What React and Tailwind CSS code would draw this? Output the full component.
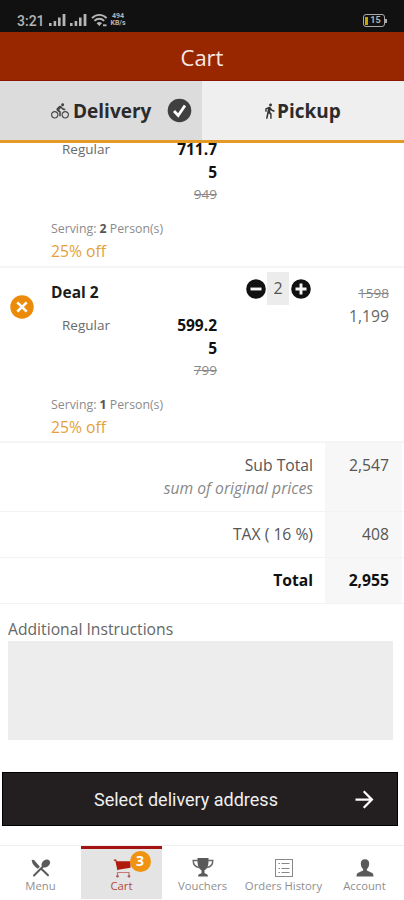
import React, { useState } from 'react';
import { MdDirectionsBike, MdDirectionsWalk, MdArrowForward } from 'react-icons/md';

const items = [
  { id: 1, size: 'Regular', price: ['711.7', '5'], oldPrice: '949', serving: 2, off: '25% off', scrolled: true },
  { id: 2, name: 'Deal 2', size: 'Regular', price: ['599.2', '5'], oldPrice: '799', serving: 1, off: '25% off', qty: 2, oldTotal: '1598', total: '1,199' },
];

function Signal() {
  return (
    <svg width="18" height="14" viewBox="0 0 18 14" fill="#b5b5b5">
      <rect x="0" y="10" width="2.6" height="3" />
      <rect x="4.6" y="8" width="2.6" height="5" />
      <rect x="9" y="4.5" width="2.6" height="8.5" />
      <rect x="13.6" y="1" width="2.8" height="12" />
    </svg>
  );
}

function StatusBar() {
  return (
    <div className="flex h-8 items-start bg-[#111] pl-[17px] pr-[17px] pt-[13px] text-[#b5b5b5]">
      <span className="w-[27px] font-['Roboto',sans-serif] text-[14px] font-medium leading-4">3:21</span>
      <div className="ml-[5px] flex gap-[3px]">
        <Signal />
        <Signal />
      </div>
      <svg className="ml-[3px]" width="17" height="14" viewBox="0 0 17 14" fill="none" stroke="#b5b5b5" strokeWidth="1.9">
        <path d="M1 5.2C5 .8 11.6.8 15.6 5.2M3.4 7.8c2.8-2.8 7-2.8 9.8 0" />
        <path d="M5.6 10.2c1.6-1.5 3.8-1.5 5.4 0L8.3 13z" fill="#b5b5b5" stroke="none" />
        <path d="M12 12.3h3.5" />
      </svg>
      <div className="ml-[2px] flex w-4 flex-col items-center font-['Roboto',sans-serif] text-[7px] font-bold leading-[7px]">
        <span>494</span>
        <span>KB/s</span>
      </div>
      <div className="ml-auto mt-px flex items-center">
        <div className="flex h-[13px] w-[22px] items-center rounded-[3px] border-[1.5px] border-[#aaa] p-px">
          <span className="h-2 w-[3px] bg-[#c5a400]" />
          <span className="flex-1 text-center font-['Roboto',sans-serif] text-[9px] font-bold leading-[9px]">15</span>
        </div>
        <span className="h-1 w-[2px] bg-[#aaa]" />
      </div>
    </div>
  );
}

function ModeTabs({ mode, setMode }) {
  return (
    <div className="flex h-[62px] border-b-[3px] border-[#e39a26] text-[19px] font-bold text-[#2b2b2b]">
      <button onClick={() => setMode('delivery')} className="flex w-[202px] items-center bg-[#dcdcdc] pl-[51px]">
        <MdDirectionsBike className="mr-1 size-[18px] text-[#444]" />
        <span className="w-[80px] pt-px text-left">Delivery</span>
        {mode === 'delivery' && (
          <svg className="ml-[14px]" width="25" height="25" viewBox="0 0 25 25">
            <circle cx="12.5" cy="12.5" r="11.8" fill="#404040" />
            <path d="M7 13l4.2 4.5L18 7.5" fill="none" stroke="#fff" strokeWidth="2.8" />
          </svg>
        )}
      </button>
      <button onClick={() => setMode('pickup')} className="flex flex-1 items-center bg-[#efefef] pl-[59px]">
        <MdDirectionsWalk className="-mr-px h-[18px] w-[17px] text-[#333]" />
        <span className="pt-px">Pickup</span>
      </button>
    </div>
  );
}

function RoundIcon({ minus }) {
  return (
    <svg width="20" height="20" viewBox="0 0 20 20">
      <circle cx="10" cy="10" r="9.8" fill="#111" />
      <path d={minus ? 'M4.5 10h11' : 'M4.5 10h11M10 4.5v11'} stroke="#f5f5f5" strokeWidth="2.9" />
    </svg>
  );
}

function CartItem({ item, qty, setQty }) {
  return (
    <div className={`flex border-b-2 border-[#f5f5f5] ${item.scrolled ? 'h-[125px]' : 'h-[175px]'}`}>
      <div className="w-[51px] pl-[10px] pt-[27px]">
        {item.name && (
          <svg width="24" height="24" viewBox="0 0 24 24">
            <circle cx="12" cy="12" r="11.7" fill="#ec8b0a" />
            <path d="M7.3 7.3l9.4 9.4M16.7 7.3l-9.4 9.4" stroke="#fff" strokeWidth="2.6" />
          </svg>
        )}
      </div>
      <div className="w-[166px] whitespace-nowrap">
        {item.name && <div className="pb-[11px] pt-[13px] text-[15.5px] font-bold leading-[22px] text-[#1b1b1b]">{item.name}</div>}
        <div className={`flex justify-between pl-[11px] ${item.scrolled ? '-mt-[5px]' : ''}`}>
          <span className="text-[13.5px] leading-[23px] text-[#6a6a6a]">{item.size}</span>
          <div className="text-right leading-[22.5px]">
            {item.price.map((p) => <div key={p} className="text-[15.5px] font-bold text-[#111]">{p}</div>)}
            <div className="text-[13.5px] text-[#888] line-through">{item.oldPrice}</div>
          </div>
        </div>
        <div className="mt-[12px] text-[12.3px] leading-[22px] text-[#8b8b8b]">
          Serving: <b className="text-[#555]">{item.serving}</b> Person(s)
        </div>
        <div className="text-[15.7px] leading-[22px] text-[#e4a03a]">{item.off}</div>
      </div>
      {item.name && (
        <>
          <div className="ml-[29px] mt-[4px] flex h-[33px] items-center">
            <button onClick={() => setQty(Math.max(1, qty - 1))}><RoundIcon minus /></button>
            <span className="ml-px mr-[2px] h-[33px] w-[22px] bg-[#ececec] text-center text-[16px] leading-[33px] text-[#555]">{qty}</span>
            <button onClick={() => setQty(qty + 1)}><RoundIcon /></button>
          </div>
          <div className="ml-auto pr-[15px] pt-[14px] text-right text-[#666]">
            <div className="text-[13.5px] leading-[23px] text-[#888] line-through">{item.oldTotal}</div>
            <div className="text-[15.7px] leading-[23px]">{item.total}</div>
          </div>
        </>
      )}
    </div>
  );
}

function TotalRow({ label, note, value, className }) {
  return (
    <div className={`flex border-b border-[#f3f3f3] text-[15.7px] leading-[23px] ${className}`}>
      <div className="flex-1 pr-[12px] pt-[11px] text-right">
        <div>{label}</div>
        {note && <div className="italic text-[#888]">{note}</div>}
      </div>
      <div className="mr-[2px] w-[77px] bg-[#f7f7f7] pr-[13px] pt-[11px] text-right">{value}</div>
    </div>
  );
}

const nav = [
  {
    label: 'Menu',
    icon: (
      <svg width="20" height="18" viewBox="0 0 20 18">
        <path d="M1 1.2c.8-.8 1.8-.4 2.5.2l5.4 6.4-2 2C3.6 7.7.5 4 1 1.2z" fill="#5a5a5a" />
        <path d="M10 9.5l7 6.8M13 6.5L3 16.5" stroke="#5a5a5a" strokeWidth="2" strokeLinecap="round" />
        <ellipse cx="14.8" cy="4.6" rx="4.7" ry="3.5" transform="rotate(-38 14.8 4.6)" fill="#5a5a5a" />
      </svg>
    ),
  },
  {
    label: 'Cart',
    active: true,
    badge: 3,
    icon: (
      <svg width="18" height="19" viewBox="0 0 18 19">
        <path d="M3 2.2h14.5v6.6L5 10.8z" fill="#b01a0c" />
        <path d="M.8 1.200h2l2.200 10" fill="none" stroke="#b01a0c" strokeWidth="1.2" />
        <path d="M4.500 16v-2.500h11.500V16" fill="none" stroke="#c27a72" strokeWidth="1.2" />
        <circle cx="4.5" cy="17.2" r="1.3" fill="#a35c54" />
        <circle cx="16" cy="17.2" r="1.3" fill="#a35c54" />
      </svg>
    ),
  },
  {
    label: 'Vouchers',
    icon: (
      <svg width="22" height="20" viewBox="0 0 22 20">
        <path d="M5.5 0h11v4c0 4.5-2 7.3-4 8.3v3c2 .3 3.5 1.5 3.5 3.2H6c0-1.7 1.5-2.9 3.5-3.2v-3c-2-1-4-3.8-4-8.3z" fill="#5a5a5a" />
        <path d="M6 2.5H1.2c0 4 2 6.5 6 7M16 2.5h4.8c0 4-2 6.5-6 7" fill="none" stroke="#6a6a6a" strokeWidth="1.5" />
      </svg>
    ),
  },
  {
    label: 'Orders History',
    icon: (
      <svg width="18" height="18" viewBox="0 0 18 18" fill="none" stroke="#888">
        <rect x=".5" y=".5" width="17" height="17" />
        <path d="M3.5 4.5H5M6.5 4.5h8M3.5 9.500H5M6.5 9.500h8M3.5 13.5H5M6.5 13.5h8" />
      </svg>
    ),
  },
  {
    label: 'Account',
    icon: (
      <svg width="18" height="18" viewBox="0 0 18 18" fill="#5a5a5a">
        <path d="M9 .3c2.8 0 4.2 1.8 4.2 4.3 0 2.4-.9 4.3-2.3 5.3v1.7l4.8 2.2c1.3.6 1.8 1.8 1.8 3.7H.5c0-1.9.5-3.1 1.8-3.7l4.8-2.2V9.9C5.7 8.9 4.8 7 4.8 4.6 4.8 2.1 6.2.3 9 .3z" />
      </svg>
    ),
  },
];

function BottomNav() {
  return (
    <div className="mt-[19px] flex h-[56px] border-t border-[#eee] text-[11.3px]">
      {nav.map((n) => (
        <div
          key={n.label}
          className={`flex h-[53px] w-[81px] shrink-0 flex-col items-center whitespace-nowrap border-t-[3px] ${
            n.active ? 'border-[#a51212] bg-[#e4e4e4] text-[#b4483c]' : 'border-transparent text-[#8f8f8f]'
          }`}
        >
          <div className="relative mt-[9px] flex h-5 items-center">
            {n.icon}
            {n.badge && (
              <span className="absolute -top-[7px] left-[17px] size-[21px] rounded-full bg-[#f19312] text-center text-[14px] font-bold leading-[20px] text-white">
                {n.badge}
              </span>
            )}
          </div>
          <span className="leading-[16px]">{n.label}</span>
        </div>
      ))}
    </div>
  );
}

export default function App() {
  const [mode, setMode] = useState('delivery');
  const [qty, setQty] = useState(2);

  return (
    <div className="h-[900px] w-[404px] overflow-hidden bg-white font-['Open_Sans','Noto_Sans',sans-serif]">
      <StatusBar />
      <header className="h-[49px] border-b border-[#8c1400] bg-[#982700] text-center text-[22px] leading-[50px] text-[#f7e9e4]">Cart</header>
      <ModeTabs mode={mode} setMode={setMode} />

      <div className="overflow-hidden">
        {items.map((item) => <CartItem key={item.id} item={item} qty={qty} setQty={setQty} />)}
      </div>

      <TotalRow className="h-[69px] text-[#555]" label="Sub Total" note="sum of original prices" value="2,547" />
      <TotalRow className="h-[46px] text-[#555]" label="TAX ( 16 %)" value="408" />
      <TotalRow className="h-[46px] font-bold text-[#111]" label="Total" value="2,955" />

      <div className="px-[8px] pt-[13px]">
        <label className="block text-[15.7px] leading-6 text-[#666]">Additional Instructions</label>
        <textarea className="block h-[99px] w-[385px] resize-none bg-[#ededed]" />
      </div>

      <button className="ml-[2px] mt-[32px] flex h-[54px] w-[396px] items-center border border-black bg-[#231f20] font-['Roboto',sans-serif] text-[18px] text-[#efefef]">
        <span className="ml-[91px] flex-1 text-left">Select delivery address</span>
        <MdArrowForward className="mr-[19px] size-[27px] text-white" />
      </button>

      <BottomNav />
    </div>
  );
}
